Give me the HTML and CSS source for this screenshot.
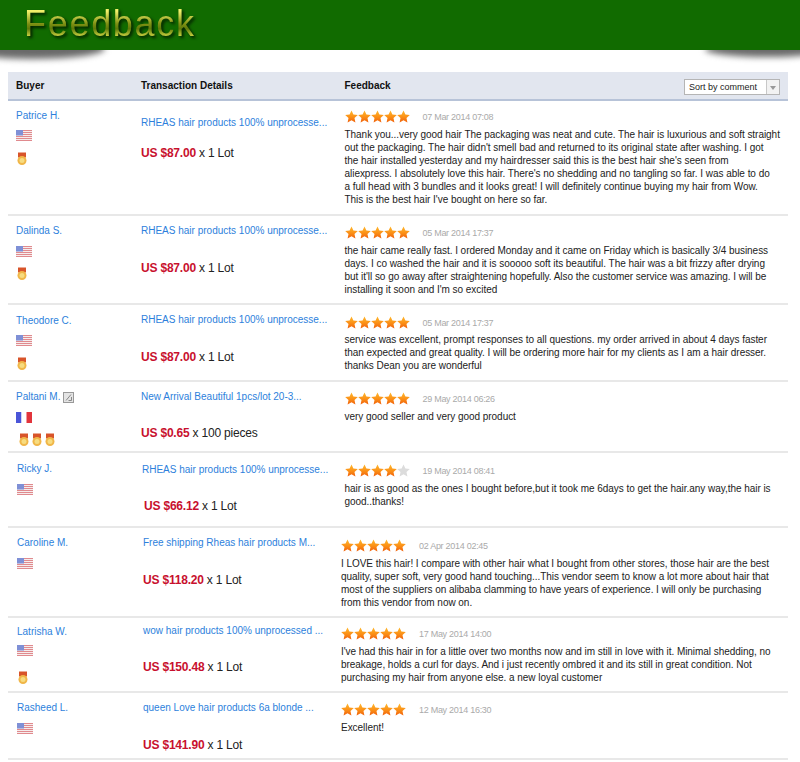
FILE: index.html
```html
<!DOCTYPE html>
<html lang="en">
<head>
<meta charset="utf-8">
<title>Feedback</title>
<link rel="stylesheet" href="styles.css">
</head>
<body>
<svg class="defs" width="0" height="0" aria-hidden="true">
  <defs>
    <linearGradient id="starFill" x1="0" y1="0" x2="0" y2="1">
      <stop offset="0" stop-color="#ffb92e"/>
      <stop offset=".55" stop-color="#fb8f16"/>
      <stop offset="1" stop-color="#f0600c"/>
    </linearGradient>
    <symbol id="star" viewBox="0 0 13 13">
      <path d="M6.5.4 8.4 4.5l4.4.5-3.3 3 .9 4.500-3.900-2.300-3.900 2.300.9-4.500L.2 5l4.400-.5z"/>
    </symbol>
    <symbol id="us" viewBox="0 0 16 11">
      <rect width="16" height="11" fill="#f6ecec"/>
      <path d="M0 .5h16M0 2.500h16M0 4.500h16M0 6.500h16M0 8.500h16M0 10.500h16" stroke="#e08a8e"/>
      <rect width="7" height="5.500" fill="#7f90d6"/>
    </symbol>
    <symbol id="fr" viewBox="0 0 16 11">
      <rect width="5.500" height="11" fill="#4a55d8"/>
      <rect x="5.500" width="5" height="11" fill="#fff"/>
      <rect x="10.500" width="5.500" height="11" fill="#e2343c"/>
    </symbol>
    <symbol id="medal" viewBox="0 0 10 14">
      <path d="M1 .5h8v5H1z" fill="#d8542a"/>
      <circle cx="5" cy="8.500" r="4.500" fill="#f0b648"/>
      <circle cx="5" cy="8.500" r="2.500" fill="#f7dc80"/>
    </symbol>
  </defs>
</svg>

<header class="banner">
  <h1 class="title">Feedback</h1>
  <span class="curl curl-left"></span>
  <span class="curl curl-right"></span>
</header>

<main class="feedback">
  <div class="head">
    <div>Buyer</div>
    <div>Transaction Details</div>
    <div class="head-last">
      <span>Feedback</span>
      <div class="sort"><span class="sort-label">Sort by comment</span><span class="sort-arrow"></span></div>
    </div>
  </div>

  <article class="row r1">
    <div class="buyer">
      <a class="name">Patrice H.</a>
      <svg class="flag"><use href="#us"/></svg>
      <div class="medals"><svg class="medal"><use href="#medal"/></svg></div>
    </div>
    <div class="deal">
      <a class="item">RHEAS hair products 100% unprocesse...</a>
      <div class="price"><b>US $87.00</b> x 1 Lot</div>
    </div>
    <div class="review">
      <div class="meta">
        <span class="stars"><svg><use href="#star"/></svg><svg><use href="#star"/></svg><svg><use href="#star"/></svg><svg><use href="#star"/></svg><svg><use href="#star"/></svg></span>
        <time>07 Mar 2014 07:08</time>
      </div>
      <p>Thank you...very good hair The packaging was neat and cute. The hair is luxurious and soft straight<br>out the packaging. The hair didn't smell bad and returned to its original state after washing. I got<br>the hair installed yesterday and my hairdresser said this is the best hair she's seen from<br>aliexpress. I absolutely love this hair. There's no shedding and no tangling so far. I was able to do<br>a full head with 3 bundles and it looks great! I will definitely continue buying my hair from Wow.<br>This is the best hair I've bought on here so far.</p>
    </div>
  </article>

  <article class="row r2">
    <div class="buyer">
      <a class="name">Dalinda S.</a>
      <svg class="flag"><use href="#us"/></svg>
      <div class="medals"><svg class="medal"><use href="#medal"/></svg></div>
    </div>
    <div class="deal">
      <a class="item">RHEAS hair products 100% unprocesse...</a>
      <div class="price"><b>US $87.00</b> x 1 Lot</div>
    </div>
    <div class="review">
      <div class="meta">
        <span class="stars"><svg><use href="#star"/></svg><svg><use href="#star"/></svg><svg><use href="#star"/></svg><svg><use href="#star"/></svg><svg><use href="#star"/></svg></span>
        <time>05 Mar 2014 17:37</time>
      </div>
      <p>the hair came really fast. I ordered Monday and it came on Friday which is basically 3/4 business<br>days. I co washed the hair and it is sooooo soft its beautiful. The hair was a bit frizzy after drying<br>but it'll so go away after straightening hopefully. Also the customer service was amazing. I will be<br>installing it soon and I'm so excited</p>
    </div>
  </article>

  <article class="row r3">
    <div class="buyer">
      <a class="name">Theodore C.</a>
      <svg class="flag"><use href="#us"/></svg>
      <div class="medals"><svg class="medal"><use href="#medal"/></svg></div>
    </div>
    <div class="deal">
      <a class="item">RHEAS hair products 100% unprocesse...</a>
      <div class="price"><b>US $87.00</b> x 1 Lot</div>
    </div>
    <div class="review">
      <div class="meta">
        <span class="stars"><svg><use href="#star"/></svg><svg><use href="#star"/></svg><svg><use href="#star"/></svg><svg><use href="#star"/></svg><svg><use href="#star"/></svg></span>
        <time>05 Mar 2014 17:37</time>
      </div>
      <p>service was excellent, prompt responses to all questions. my order arrived in about 4 days faster<br>than expected and great quality. I will be ordering more hair for my clients as I am a hair dresser.<br>thanks Dean you are wonderful</p>
    </div>
  </article>

  <article class="row r4">
    <div class="buyer">
      <div class="name-line"><a class="name">Paltani M.</a>
        <svg class="badge" viewBox="0 0 11 11"><rect x=".5" y=".5" width="10" height="10" fill="#e4e4e4" stroke="#999"/><path d="M3 8.500 8 2.500M5.500 8.500h3V5" fill="none" stroke="#888"/></svg>
      </div>
      <svg class="flag"><use href="#fr"/></svg>
      <div class="medals"><svg class="medal"><use href="#medal"/></svg><svg class="medal"><use href="#medal"/></svg><svg class="medal"><use href="#medal"/></svg></div>
    </div>
    <div class="deal">
      <a class="item">New Arrival Beautiful 1pcs/lot 20-3...</a>
      <div class="price"><b>US $0.65</b> x 100 pieces</div>
    </div>
    <div class="review">
      <div class="meta">
        <span class="stars"><svg><use href="#star"/></svg><svg><use href="#star"/></svg><svg><use href="#star"/></svg><svg><use href="#star"/></svg><svg><use href="#star"/></svg></span>
        <time>29 May 2014 06:26</time>
      </div>
      <p>very good seller and very good product</p>
    </div>
  </article>

  <article class="row r5">
    <div class="buyer">
      <a class="name">Ricky J.</a>
      <svg class="flag"><use href="#us"/></svg>
    </div>
    <div class="deal">
      <a class="item">RHEAS hair products 100% unprocesse...</a>
      <div class="price"><b>US $66.12</b> x 1 Lot</div>
    </div>
    <div class="review">
      <div class="meta">
        <span class="stars"><svg><use href="#star"/></svg><svg><use href="#star"/></svg><svg><use href="#star"/></svg><svg><use href="#star"/></svg><svg class="off"><use href="#star"/></svg></span>
        <time>19 May 2014 08:41</time>
      </div>
      <p>hair is as good as the ones I bought before,but it took me 6days to get the hair.any way,the hair is<br>good..thanks!</p>
    </div>
  </article>

  <article class="row r6">
    <div class="buyer">
      <a class="name">Caroline M.</a>
      <svg class="flag"><use href="#us"/></svg>
    </div>
    <div class="deal">
      <a class="item">Free shipping Rheas hair products M...</a>
      <div class="price"><b>US $118.20</b> x 1 Lot</div>
    </div>
    <div class="review">
      <div class="meta">
        <span class="stars"><svg><use href="#star"/></svg><svg><use href="#star"/></svg><svg><use href="#star"/></svg><svg><use href="#star"/></svg><svg><use href="#star"/></svg></span>
        <time>02 Apr 2014 02:45</time>
      </div>
      <p>I LOVE this hair! I compare with other hair what I bought from other stores, those hair are the best<br>quality, super soft, very good hand touching...This vendor seem to know a lot more about hair that<br>most of the suppliers on alibaba clamming to have years of experience. I will only be purchasing<br>from this vendor from now on.</p>
    </div>
  </article>

  <article class="row r7">
    <div class="buyer">
      <a class="name">Latrisha W.</a>
      <svg class="flag"><use href="#us"/></svg>
      <div class="medals"><svg class="medal"><use href="#medal"/></svg></div>
    </div>
    <div class="deal">
      <a class="item">wow hair products 100% unprocessed ...</a>
      <div class="price"><b>US $150.48</b> x 1 Lot</div>
    </div>
    <div class="review">
      <div class="meta">
        <span class="stars"><svg><use href="#star"/></svg><svg><use href="#star"/></svg><svg><use href="#star"/></svg><svg><use href="#star"/></svg><svg><use href="#star"/></svg></span>
        <time>17 May 2014 14:00</time>
      </div>
      <p>I've had this hair in for a little over two months now and im still in love with it. Minimal shedding, no<br>breakage, holds a curl for days. And i just recently ombred it and its still in great condition. Not<br>purchasing my hair from anyone else. a new loyal customer</p>
    </div>
  </article>

  <article class="row r8">
    <div class="buyer">
      <a class="name">Rasheed L.</a>
      <svg class="flag"><use href="#us"/></svg>
    </div>
    <div class="deal">
      <a class="item">queen Love hair products 6a blonde ...</a>
      <div class="price"><b>US $141.90</b> x 1 Lot</div>
    </div>
    <div class="review">
      <div class="meta">
        <span class="stars"><svg><use href="#star"/></svg><svg><use href="#star"/></svg><svg><use href="#star"/></svg><svg><use href="#star"/></svg><svg><use href="#star"/></svg></span>
        <time>12 May 2014 16:30</time>
      </div>
      <p>Excellent!</p>
    </div>
  </article>
</main>
</body>
</html>
```
FILE: styles.css
```css
* { box-sizing: border-box; }
html, body { margin: 0; padding: 0; }
body {
  background: #fff;
  color: #222;
  font-family: "Liberation Sans", Arial, sans-serif;
  font-size: 10px;
  overflow: hidden;
  height: 762px;
}
.defs { display: block; height: 0; }

.banner {
  position: relative;
  height: 50px;
  background: #116b00;
  padding: 4px 0 0 24px;
}
.title {
  margin: 0;
  font-size: 36px;
  line-height: 40px;
  font-weight: 400;
  letter-spacing: 1.7px;
  color: transparent;
  background: linear-gradient(#f2f06a 18%, #7d8f12 50%, #5d7a0a 62%, #e0e24a 84%);
  -webkit-background-clip: text;
  background-clip: text;
  display: inline-block;
  filter: drop-shadow(2px 2px 1.500px #041f00);
}
.curl {
  position: absolute;
  z-index: -1;
  background: #6a6a6a;
  border-radius: 50%;
  filter: blur(3px);
}
.curl-left {
  left: -40px;
  top: 38px;
  width: 145px;
  height: 21px;
}
.curl-right {
  right: -30px;
  top: 42px;
  width: 125px;
  height: 15px;
}

.feedback {
  width: 780px;
  margin: 22px 0 0 8px;
}
.head {
  display: grid;
  grid-template-columns: 125px 203.500px 1fr;
  align-items: center;
  height: 29px;
  padding: 0 8px;
  background: #e2e6ef;
  border-bottom: 2px solid #b7c3d8;
  color: #111;
  font-size: 10px;
  font-weight: 700;
}
.head-last {
  display: flex;
  align-items: center;
  justify-content: space-between;
}
.sort {
  display: flex;
  width: 96px;
  height: 16px;
  margin-top: 2px;
  background: #fff;
  border: 1px solid #b5b5b5;
  font-weight: 400;
  font-size: 9px;
  line-height: 15px;
}
.sort-label { flex: 1; padding-left: 4px; color: #222; }
.sort-arrow {
  position: relative;
  width: 13px;
  background: #f2f2f2;
  border-left: 1px solid #c8c8c8;
}
.sort-arrow::after {
  content: "";
  position: absolute;
  left: 3px;
  top: 6px;
  border: 3px solid transparent;
  border-top: 4px solid #999;
  border-bottom: 0;
}

.row {
  display: grid;
  grid-template-columns: 125px 203.500px 1fr;
  padding: 8px 0 0 8px;
  border-bottom: 2px solid #e8e8e8;
}
.r1 { height: 115px; }
.r2 { height: 89px; }
.r3 { height: 77px; }
.r4 { height: 71px; }
.r5 { height: 75px; padding-left: 9px; }
.r6 { height: 90px; padding-left: 9px; }
.r7 { height: 75px; padding-left: 9px; }
.r8 { height: 67px; padding-left: 9px; }

.buyer { display: flex; flex-direction: column; align-items: flex-start; }
.name {
  color: #2d7fdc;
  font-size: 10px;
  line-height: 14px;
}
.name-line { display: flex; align-items: center; gap: 3px; }
.badge { width: 11px; height: 11px; }
.flag { display: block; width: 16px; height: 11px; margin-top: 8px; }
.medals { display: flex; gap: 3px; margin-top: 10px; padding-left: 3px; }
.medal { display: block; width: 10px; height: 14px; }

.r1 .medals, .r2 .medals, .r3 .medals, .r7 .medals { padding-left: 1px; }
.r1 .flag { margin-top: 7px; }
.r1 .medals { margin-top: 11px; }
.r3 .name, .r5 .name { margin-top: 1px; }
.r3 .flag { margin-top: 7px; }
.r3 .medals { margin-top: 11px; }
.r7 .name { margin-top: -1px; }
.r7 .flag { margin-top: 6px; }
.r7 .medals { margin-top: 15px; }

.deal { display: flex; flex-direction: column; align-items: flex-start; }
.item {
  color: #2d7fdc;
  font-size: 10px;
  line-height: 14px;
}
.price {
  margin-top: 23px;
  color: #222;
  font-size: 12px;
  letter-spacing: -0.2px;
  line-height: 14px;
}
.price b { color: #c8102e; }

.r1 .item { margin-top: 7px; }
.r1 .price { margin-top: 16px; }
.r4 .price { margin-top: 22px; }
.r5 .item { margin-top: 2px; }
.r5 .price { margin-top: 22px; margin-left: 2px; }
.r6 .deal, .r7 .deal, .r8 .deal { margin-left: 1px; }
.r7 .item { margin-top: -2px; }
.r7 .price { margin-top: 22px; }

.review { padding-top: 2px; }
.r1 .review, .r7 .review { padding-top: 1px; }
.r3 .review, .r5 .review, .r6 .review { padding-top: 3px; }
.r5 .review { margin-left: -1px; }
.r6 .review, .r7 .review, .r8 .review { margin-left: -4.500px; }

.meta { display: flex; align-items: center; gap: 13px; height: 13px; }
.stars { display: flex; }
.stars svg {
  display: block;
  width: 13px;
  height: 13px;
  fill: url(#starFill);
}
.stars svg.off { fill: #dcdcdc; }
time { color: #aaa; font-size: 9px; letter-spacing: -0.28px; }
.review p {
  margin: 5px 0 0;
  font-size: 10px;
  letter-spacing: -0.04px;
  line-height: 13px;
  color: #222;
  white-space: nowrap;
}
.r3 .review p { margin-top: 4px; }
```
